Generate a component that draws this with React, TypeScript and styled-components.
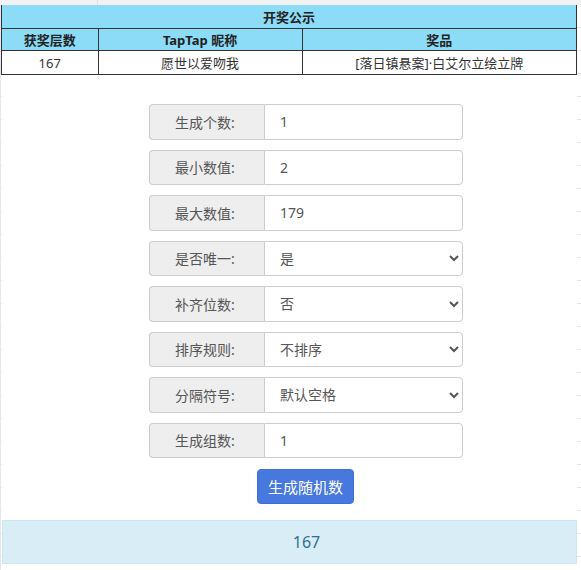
import React from 'react';
import styled, { createGlobalStyle } from 'styled-components';

const fontStack = `"Noto Sans", "Noto Sans CJK SC", sans-serif`;

const GlobalStyle = createGlobalStyle`
  html, body {
    margin: 0;
    padding: 0;
  }

  body {
    font-family: ${fontStack};
    color: #333;
    background-color: #fff;
    /* sheet gutter ticks on both edges */
    background-image:
      linear-gradient(#e6e6ee, #e6e6ee),
      repeating-linear-gradient(to bottom, transparent 0 22px, #e4e4ea 22px 23px),
      repeating-linear-gradient(to bottom, transparent 0 22px, #e4e4ea 22px 23px);
    background-size: 1px 100%, 2px 100%, 4px 100%;
    background-position: 0 0, 0 5px, 100% 5px;
    background-repeat: no-repeat;
    min-height: 570px;
  }
`;

const Page = styled.div`
  display: flex;
  flex-direction: column;
`;

const TopStrip = styled.div`
  height: 5px;
  background: #f2f2f4;
  display: flex;
`;

const StripCell = styled.div<{ $w: number }>`
  width: ${(p) => p.$w}px;
  border-right: 1px solid #e2e2e6;
`;

const Notice = styled.table`
  width: 576px;
  margin-left: 1px;
  border-collapse: collapse;
  font-size: 13px;
  line-height: 16px;

  th,
  td {
    border: 1px solid #333;
    text-align: center;
    padding: 0;
  }
`;

const TitleCell = styled.th`
  background: #8cdcf8;
  height: 23px;
  font-weight: bold;
  color: #222;
  && {
    border-top: none;
  }
`;

const HeadCell = styled.th<{ $w: number }>`
  width: ${(p) => p.$w}px;
  background: #8cdcf8;
  height: 21px;
  font-weight: bold;
  color: #222;
`;

const BodyCell = styled.td`
  height: 23px;
  color: #333;
`;

const Form = styled.div`
  margin-top: 29px;
  margin-left: 149px;
  width: 314px;
  display: flex;
  flex-direction: column;
  gap: 10px;
`;

const Group = styled.div`
  display: flex;
  height: 35.5px;
  box-sizing: border-box;
`;

const Addon = styled.span`
  width: 115px;
  flex: none;
  box-sizing: border-box;
  display: flex;
  align-items: center;
  justify-content: center;
  background: #eee;
  border: 1px solid #ccc;
  border-right: none;
  border-radius: 4px 0 0 4px;
  color: #555;
  font-size: 14px;
  padding-right: 4px;
`;

const controlStyle = `
  flex: 1;
  min-width: 0;
  box-sizing: border-box;
  height: 100%;
  border: 1px solid #ccc;
  border-radius: 0 4px 4px 0;
  background: #fff;
  color: #555;
  font-family: ${fontStack};
  font-size: 14px;
  outline: none;
`;

const Field = styled.input`
  ${controlStyle}
  padding: 0 15px;
`;

const Choice = styled.select`
  ${controlStyle}
  padding: 0 11px;
`;

const ButtonRow = styled.div`
  display: flex;
`;

const Generate = styled.button`
  margin: 11px 0 0 257px;
  width: 97px;
  height: 35px;
  border: 1px solid #3f6fd6;
  border-radius: 4px;
  background: #4778dd;
  color: #fff;
  font-family: ${fontStack};
  font-size: 15px;
  cursor: pointer;
`;

const Result = styled.div`
  margin: 16px 4px 0 2px;
  height: 44px;
  box-sizing: border-box;
  border: 1px solid #cbe8f2;
  background: #d9edf7;
  color: #31708f;
  font-size: 16px;
  display: flex;
  align-items: center;
  justify-content: center;
  padding-left: 34px;
`;

type Row =
  | { label: string; kind: 'input'; value: string }
  | { label: string; kind: 'select'; value: string; options: string[] };

const rows: Row[] = [
  { label: '生成个数:', kind: 'input', value: '1' },
  { label: '最小数值:', kind: 'input', value: '2' },
  { label: '最大数值:', kind: 'input', value: '179' },
  { label: '是否唯一:', kind: 'select', value: '是', options: ['是', '否'] },
  { label: '补齐位数:', kind: 'select', value: '否', options: ['否', '是'] },
  { label: '排序规则:', kind: 'select', value: '不排序', options: ['不排序', '升序', '降序'] },
  { label: '分隔符号:', kind: 'select', value: '默认空格', options: ['默认空格', '逗号', '换行'] },
  { label: '生成组数:', kind: 'input', value: '1' },
];

export default function App() {
  return (
    <>
      <GlobalStyle />
      <Page>
        <TopStrip>
          <StripCell $w={97} />
        </TopStrip>

        <Notice>
          <thead>
            <tr>
              <TitleCell colSpan={3}>开奖公示</TitleCell>
            </tr>
            <tr>
              <HeadCell $w={96}>获奖层数</HeadCell>
              <HeadCell $w={204}>TapTap 昵称</HeadCell>
              <HeadCell $w={275}>奖品</HeadCell>
            </tr>
          </thead>
          <tbody>
            <tr>
              <BodyCell>167</BodyCell>
              <BodyCell>愿世以爱吻我</BodyCell>
              <BodyCell>[落日镇悬案]·白艾尔立绘立牌</BodyCell>
            </tr>
          </tbody>
        </Notice>

        <Form>
          {rows.map((row) => (
            <Group key={row.label}>
              <Addon>{row.label}</Addon>
              {row.kind === 'input' ? (
                <Field type="text" defaultValue={row.value} />
              ) : (
                <Choice defaultValue={row.value}>
                  {row.options.map((o) => (
                    <option key={o}>{o}</option>
                  ))}
                </Choice>
              )}
            </Group>
          ))}
        </Form>

        <ButtonRow>
          <Generate type="button">生成随机数</Generate>
        </ButtonRow>

        <Result>167</Result>
      </Page>
    </>
  );
}
